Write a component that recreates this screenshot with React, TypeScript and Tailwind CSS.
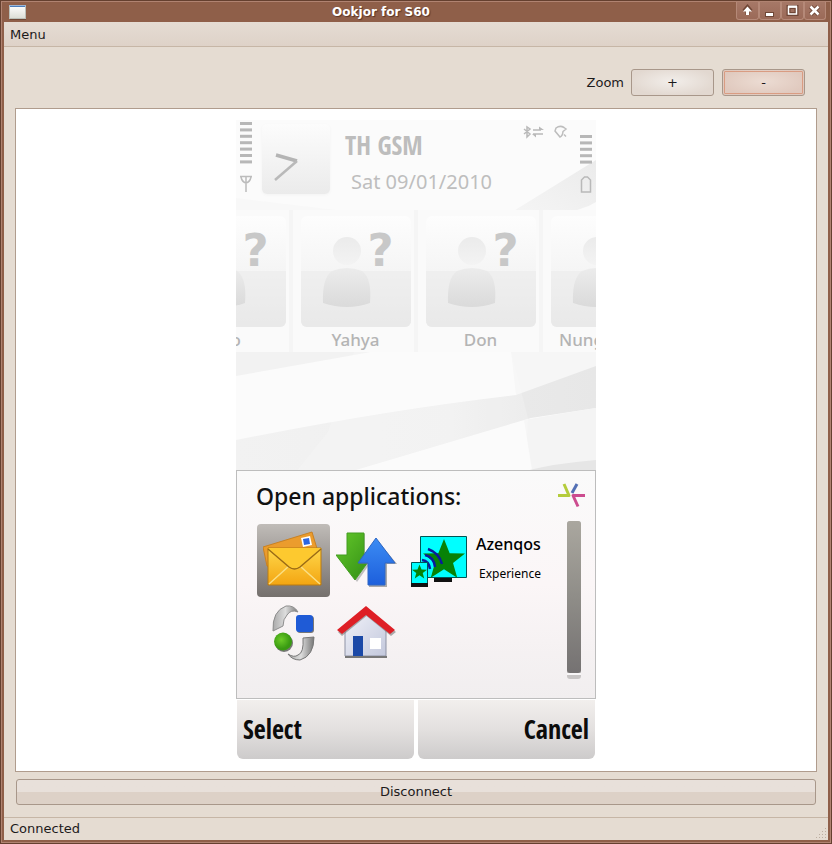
import React from "react";

const PHONE_FONT = "font-['Noto_Sans',sans-serif]";
const NARROW_FONT = "font-['Open_Sans_Condensed','Liberation_Sans_Narrow','Noto_Sans',sans-serif]";

function WindowButton({ label, children }: { label: string; children: React.ReactNode }) {
  return (
    <button
      type="button"
      aria-label={label}
      className="flex h-[18px] w-[23px] items-center justify-center rounded-b-[3px] border border-t-0 border-[#b58978] bg-linear-to-b from-[#a67867] to-[#9b6a58]"
    >
      <svg width="15" height="15" viewBox="0 0 15 15" aria-hidden="true">
        {children}
      </svg>
    </button>
  );
}

function TitleBar() {
  return (
    <header className="grid h-5 shrink-0 grid-cols-[24px_1fr_94px] items-start bg-[#8f5f49]">
      <svg className="mt-[3px] ml-[6px]" width="20" height="15" viewBox="0 0 20 15" aria-hidden="true">
        <defs>
          <linearGradient id="win" x2="0" y2="1">
            <stop stopColor="#fff" />
            <stop offset="1" stopColor="#dcddd6" />
          </linearGradient>
        </defs>
        <path d="M2 14.500h16" stroke="#6f4837" />
        <rect x="1.500" y=".5" width="16" height="13" fill="url(#win)" stroke="#bcc0ba" />
        <path d="M1 .5h17" stroke="#9bb4d4" />
        <path d="M2 1.500h15" stroke="#4b7dbb" />
      </svg>
      <h1 className="text-center text-[12px] leading-5 font-bold text-white [text-shadow:1px_1px_1px_#5a3425]">
        Ookjor for S60
      </h1>
      <div className="flex justify-end pr-1">
        <WindowButton label="Shade">
          <path d="M7.500 12V5M4 8l3.500-4L11 8" fill="none" stroke="#6f4636" strokeWidth="4" />
          <path d="M6 12V8.500H3L7.500 3.500 12 8.500H9v3.500z" fill="#fff" />
        </WindowButton>
        <WindowButton label="Minimize">
          <path d="M3 9h9v5H3z" fill="#6f4636" />
          <path d="M4 10h7v3H4z" fill="#fff" />
        </WindowButton>
        <WindowButton label="Maximize">
          <path d="M3.500 4h8v7h-8z" fill="none" stroke="#6f4636" strokeWidth="4" />
          <path d="M3.500 4h8v7h-8z" fill="none" stroke="#fff" strokeWidth="1.500" />
          <path d="M3 3.500h9" stroke="#fff" strokeWidth="2" />
        </WindowButton>
        <WindowButton label="Close">
          <path d="M3.500 3.500l8 8M11.500 3.500l-8 8" stroke="#6f4636" strokeWidth="4.500" />
          <path d="M3.500 3.500l8 8M11.500 3.500l-8 8" stroke="#fff" strokeWidth="2.500" />
        </WindowButton>
      </div>
    </header>
  );
}

function Wallpaper() {
  return (
    <svg className="absolute inset-0 size-full" viewBox="0 0 360 640" preserveAspectRatio="none" aria-hidden="true">
      <defs>
        <linearGradient id="swoosh" x1="0" x2="1">
          <stop stopColor="#f2f2f2" />
          <stop offset=".6" stopColor="#efefef" />
          <stop offset=".8" stopColor="#e9e9e9" />
          <stop offset="1" stopColor="#e7e7e7" />
        </linearGradient>
        <linearGradient id="corner" x1="1" y1="0" x2="0" y2="1">
          <stop stopColor="#ebebeb" />
          <stop offset="1" stopColor="#f5f5f5" />
        </linearGradient>
      </defs>
      <rect width="360" height="640" fill="#fbfbfb" />
      <path d="M360 40L360 82 Q345 92 320 92H276Z" fill="url(#corner)" />
      <path d="M0 78L100 90H0Z" fill="#f8f8f8" />
      <path d="M0 232H135L0 256Z" fill="#f2f2f2" />
      <path d="M275 232H360V255L280 276Z" fill="#f6f6f6" />
      <path d="M0 320Q150 290 280 275L360 246V288L295 298L120 350H0Z" fill="url(#swoosh)" />
      <path d="M288 300L360 288V350H296Z" fill="#f4f4f4" />
      <path d="M285 352Q320 343 360 340V352Z" fill="#e6e6e6" />
      <path d="M118 232L92 312L60 352H290L292 298L275 232Z" fill="#fff" opacity=".2" />
    </svg>
  );
}

function LevelBars({ count }: { count: number }) {
  return (
    <svg width="12" height={count === 7 ? 42 : 29} viewBox={count === 7 ? "0 0 12 42" : "0 0 12 29"} aria-hidden="true">
      {Array.from({ length: count }, (_, i) => (
        <rect key={i} y={i * 6.4} width="12" height="3" fill="#b7b7b7" />
      ))}
    </svg>
  );
}

function PhoneStatus() {
  return (
    <div className="relative flex h-[90px] items-start">
      <div className="flex w-[26px] flex-col items-center gap-[11px] pt-[2px] pr-[6px]">
        <LevelBars count={7} />
        <svg width="12" height="17" viewBox="0 0 12 17" fill="none" stroke="#bcbcbc" strokeWidth="1.500" aria-hidden="true">
          <path d="M6 17V1M0 1.500h12M1 2q1 5 5 6q4-1 5-6" />
        </svg>
      </div>
      <div className="mt-1 flex h-[70px] w-[68px] items-center rounded-[5px] bg-linear-to-b from-[#fcfcfc] to-[#ebebeb] shadow-sm shadow-[#f4f4f4]">
        <svg className="mt-4 ml-3" width="26" height="28" viewBox="0 0 26 28" fill="none" aria-hidden="true">
          <path d="M2 2l21 6" stroke="#b4b4b4" strokeWidth="3.500" />
          <path d="M23 8L1 27" stroke="#b9b9b9" strokeWidth="2.500" />
        </svg>
      </div>
      <div className="flex flex-1 flex-col pt-[9px] pl-[15px] whitespace-nowrap">
        <p className={`${NARROW_FONT} text-[26px] leading-8 font-bold text-[#bdbdbd]`}>TH GSM</p>
        <p className={`${PHONE_FONT} pt-[7px] pl-[6px] text-[20px] leading-7 text-[#bebebe]`}>Sat 09/01/2010</p>
      </div>
      <div className="absolute top-[5px] right-[28px] flex gap-2">
        <svg width="22" height="14" viewBox="0 0 22 14" fill="none" stroke="#b9b9b9" strokeWidth="1.500" aria-hidden="true">
          <path d="M1 4l6 5-3 3V2l3 2-6 5M10 5h8M10 9h10" />
          <path d="M16 1.500l5 3.500h-5zM13 12.500L9 9h4z" fill="#b9b9b9" stroke="none" />
        </svg>
        <svg width="15" height="14" viewBox="0 0 15 14" fill="none" stroke="#bdbdbd" strokeWidth="1.500" aria-hidden="true">
          <path d="M3 3q4-3 8-.5l2 1.500-3 2.500q0 3-2 5L7 12 2 6zM11 9.500l2 2" />
        </svg>
      </div>
      <div className="flex w-4 flex-col gap-[12px] pt-[15px]">
        <LevelBars count={5} />
        <svg width="12" height="17" viewBox="0 0 12 17" fill="none" stroke="#b9b9b9" strokeWidth="1.500" aria-hidden="true">
          <path d="M1.500 16V4l3-3h3l3 3v12z" />
        </svg>
      </div>
    </div>
  );
}

const LABEL_ALIGN = {
  center: "self-center",
  start: "self-start pl-3",
  end: "self-end pr-12",
};

function Contact({ name, align = "center" }: { name: string; align?: keyof typeof LABEL_ALIGN }) {
  return (
    <li className="flex h-[142px] w-[125px] shrink-0 flex-col items-center border-r-4 border-[#f5f5f5] bg-[#fafafa] pt-[6px] pl-1">
      <div className="relative h-[111px] w-[110px] overflow-hidden rounded-[6px] bg-linear-to-b from-[#fdfdfd] via-[#f5f5f5] to-[#e9e9e9]">
        <svg width="110" height="111" viewBox="0 0 110 111" aria-hidden="true">
          <defs>
            <linearGradient id="person" x2="0" y2="1">
              <stop stopColor="#ececec" />
              <stop offset="1" stopColor="#dadada" />
            </linearGradient>
            <linearGradient id="head" x2="0" y2="1">
              <stop stopColor="#ebebeb" />
              <stop offset="1" stopColor="#f3f3f3" />
            </linearGradient>
          </defs>
          <path d="M0 55H110V111H0Z" fill="#e8e8e8" opacity=".45" />
          <circle cx="46" cy="35" r="14" fill="url(#head)" />
          <path d="M22 87Q21 62 31 55Q46 49 61 55Q71 62 69 87Q46 95 22 87Z" fill="url(#person)" />
        </svg>
        <span className="absolute top-3 left-[67px] font-['DejaVu_Sans',sans-serif] text-[45px] leading-[46px] font-bold text-[#c8c8c8]">
          ?
        </span>
      </div>
      <span className={`${PHONE_FONT} ${LABEL_ALIGN[align]} pt-[2px] text-[17px] leading-[22px] font-medium text-[#b4b4b4]`}>
        {name}
      </span>
    </li>
  );
}

function AppTile({ label, selected, children }: { label: string; selected?: boolean; children: React.ReactNode }) {
  return (
    <button
      type="button"
      aria-label={label}
      className={
        selected
          ? "flex size-[73px] items-center justify-center rounded-[4px] bg-linear-to-b from-[#c0bcb8] to-[#75706d]"
          : "flex size-[73px] items-center justify-center"
      }
    >
      <svg width="62" height="62" viewBox="0 0 62 62" aria-hidden="true">
        {children}
      </svg>
    </button>
  );
}

const STAR = "M0-10L2.700-3.200 10-3.100 4.300 1.400 6.300 8.500 0 4.400-6.300 8.500-4.300 1.400-10-3.100-2.700-3.200Z";

function OpenApplications() {
  return (
    <section className="flex h-[229px] flex-col border border-[#bdbdbd] bg-linear-to-b from-[#fafafa] via-[#fbf6f7] to-[#f1eeef]">
      <div className="flex items-start justify-between pt-[7px] pr-[9px] pl-[19px]">
        <h2 className={`${PHONE_FONT} text-[23px] leading-9 font-medium text-[#111]`}>Open applications:</h2>
        <svg className="mt-1" width="29" height="27" viewBox="0 0 29 27" fill="none" strokeWidth="3" aria-hidden="true">
          <path d="M1 13.500h11L7 2" stroke="#b4cc3c" strokeLinejoin="round" />
          <path d="M15 11l5-9" stroke="#5470b5" />
          <path d="M28 13.500H16l5 11" stroke="#cc4c8f" strokeLinejoin="round" />
        </svg>
      </div>
      <div className="flex items-start pt-[7px] pl-5">
        <div className="grid grid-cols-[73px_73px_73px] pt-[3px]">
          <AppTile label="Messaging" selected>
            <defs>
              <linearGradient id="mail" x2="0" y2="1">
                <stop stopColor="#ffd84a" />
                <stop offset="1" stopColor="#f3a512" />
              </linearGradient>
            </defs>
            <path d="M0 17L49 2 55 22 12 38 4 36Z" fill="#eb9c2d" stroke="#c98122" />
            <path d="M38 8l9-2 2 9-9 2z" fill="#fff" />
            <path d="M40 9l6-1 1 6-6 1z" fill="#2d66e0" />
            <path d="M5 18H58V55H5Z" fill="url(#mail)" stroke="#b97a12" />
            <path d="M6 54L26 36M57 54L37 36" stroke="#fbdf83" strokeWidth="1.500" />
            <path d="M5 18L26 36Q31.500 41 37 36L58 18Z" fill="#fdc92f" />
            <path d="M5 19L26 37Q31.500 41 37 37L58 19" fill="none" stroke="#9a6b15" strokeWidth="1.500" />
          </AppTile>
          <AppTile label="Connections">
            <defs>
              <linearGradient id="down" x2="1" y2="1">
                <stop stopColor="#64c82a" />
                <stop offset="1" stopColor="#2f8a14" />
              </linearGradient>
              <linearGradient id="up" x2="0" y2="1">
                <stop stopColor="#3c8cf4" />
                <stop offset="1" stopColor="#1d5fdc" />
              </linearGradient>
            </defs>
            <path d="M12 4H29V25H40L21 52 2 25H12Z" fill="#888" opacity=".5" />
            <path d="M11 3H28V25H37L19 50 0 25H11Z" fill="url(#down)" stroke="#429d20" />
            <path d="M41 10L61 34H51V57H33V34H23Z" fill="#777" opacity=".6" />
            <path d="M40 8L59 33H49V55H32V33H22Z" fill="url(#up)" stroke="#2e67c4" />
          </AppTile>
          <AppTile label="Azenqos Experience">
            <path d="M11.500 6.500H57.500V47.500H11.500Z" fill="#0ff" stroke="#055" />
            <path d="M25 48H43V52H25Z" fill="#111" />
            <g transform="translate(35 30) scale(2.100)">
              <path d={STAR} fill="#078207" />
            </g>
            <path d="M13 30q7 1 8 9M16 25q9 2 10 12M19 19q11 4 14 15" fill="none" stroke="#0a1a9c" strokeWidth="2.500" />
            <path d="M2.500 32.500H18.500V55.500H2.500Z" fill="#0ff" stroke="#055" />
            <path d="M2 53H19V57H2Z" fill="#111" />
            <g transform="translate(10.500 42) scale(.75)">
              <path d={STAR} fill="#078207" />
            </g>
          </AppTile>
          <AppTile label="Switch">
            <defs>
              <linearGradient id="ring">
                <stop stopColor="#aaa" />
                <stop offset=".5" stopColor="#ddd" />
                <stop offset="1" stopColor="#777" />
              </linearGradient>
              <radialGradient id="ball" cx=".4" cy=".4">
                <stop stopColor="#6ccc28" />
                <stop offset="1" stopColor="#399a12" />
              </radialGradient>
            </defs>
            <path d="M10 28Q9 8 23 3Q31 2 35 9Q28 6 24 12Q20 16 20 23Z" fill="url(#ring)" stroke="#8d8d8d" />
            <path d="M40 35Q41 50 35 52Q31 55 25 51Q29 57 37 57Q51 53 51 34Z" fill="url(#ring)" stroke="#777" />
            <circle cx="21" cy="40" r="9" fill="#777" />
            <circle cx="20" cy="38.500" r="9" fill="url(#ball)" />
            <rect x="34" y="13" width="17" height="17" rx="3" fill="#777" />
            <rect x="33" y="12" width="17" height="17" rx="3" fill="#1f5bd6" />
          </AppTile>
          <AppTile label="Home">
            <defs>
              <linearGradient id="wall" x2="1" y2="1">
                <stop stopColor="#f2f3fa" />
                <stop offset="1" stopColor="#c3c8dc" />
              </linearGradient>
            </defs>
            <path d="M9 27L31 8 50 27V53H9Z" fill="url(#wall)" stroke="#8e93a5" />
            <path d="M9 54H51" stroke="#777" strokeWidth="2" />
            <path d="M30.500 5L60 29 55 33 30.500 13 6 33 2 29Z" fill="#777" opacity=".6" />
            <path d="M30 3L59 27 54 31 30 12 6 31 1 27Z" fill="#de1f26" />
            <path d="M17 33H27V53H17Z" fill="#1b49a7" />
            <path d="M34 35H45V46H34Z" fill="#fff" />
          </AppTile>
        </div>
        <div className={`${PHONE_FONT} flex flex-1 flex-col pt-[13px] text-black`}>
          <span className="text-[16px] leading-5 font-medium">Azenqos</span>
          <span className="pt-[10px] pl-[3px] text-[12px] leading-5">Experience</span>
        </div>
        <div className="mr-[14px] flex h-[158px] w-[14px] flex-col rounded-[3px] bg-[#c8c5c5]">
          <div className="h-[152px] rounded-[3px] bg-linear-to-b from-[#aaa79f] via-[#8f8d88] to-[#757272]" />
          <div className="h-[2px] bg-[#f8f6f7]" />
        </div>
      </div>
    </section>
  );
}

function Phone() {
  return (
    <div className="relative flex h-[640px] w-[360px] flex-col overflow-hidden">
      <Wallpaper />
      <div className="relative flex flex-1 flex-col">
        <PhoneStatus />
        <ul className="-ml-[68px] flex w-[500px]">
          <Contact name="o" align="end" />
          <Contact name="Yahya" />
          <Contact name="Don" />
          <Contact name="Nung" align="start" />
        </ul>
      </div>
      <div className="relative">
        <OpenApplications />
        <div className={`${NARROW_FONT} grid h-[60px] grid-cols-2 gap-1 bg-white px-px pt-px text-[26px] font-bold text-[#0c0c0c]`}>
          <button type="button" className="rounded-b-[6px] bg-linear-to-b from-[#f2efed] via-[#e3e0df] to-[#cdcbcb] px-[6px] text-left">
            Select
          </button>
          <button type="button" className="rounded-b-[6px] bg-linear-to-b from-[#f2efed] via-[#e3e0df] to-[#cdcbcb] px-[6px] text-right">
            Cancel
          </button>
        </div>
        <div className="h-px bg-white" />
      </div>
    </div>
  );
}

export default function App() {
  return (
    <div className="flex min-h-screen flex-col border border-[#65402f] bg-[#e5dcd2] font-['DejaVu_Sans',sans-serif] text-[13px] text-[#1c1a1b]">
      <div className="flex flex-1 flex-col border border-[#b08371]">
        <TitleBar />
        <div className="flex flex-1 flex-col border-2 border-t-0 border-[#8f5f49]">
          <nav className="flex h-[25px] items-center border-b border-[#c6b6a6] bg-linear-to-b from-[#e5dcd3] to-[#ded2c8] px-[6px] pt-px">
            <button type="button">Menu</button>
          </nav>
          <main className="flex flex-1 flex-col px-[11px] pt-[22px] pb-3">
            <div className="flex items-center justify-end pr-3">
              <span className="pr-[7px]">Zoom</span>
              <button
                type="button"
                aria-label="Zoom in"
                className="h-[27px] w-[83px] rounded-[3px] border border-[#a8978a] bg-[radial-gradient(ellipse_at_50%_45%,#f2eeea,#e2d8d0_75%)]"
              >
                +
              </button>
              <button
                type="button"
                aria-label="Zoom out"
                className="ml-2 h-[27px] w-[83px] rounded-[3px] border border-[#a8978a] bg-[radial-gradient(ellipse_at_50%_45%,#ecdcd3,#e0c9be_75%)] outline-1 -outline-offset-3 outline-[#d99c82]"
              >
                -
              </button>
            </div>
            <div className="mt-3 flex flex-1 items-center justify-center border border-[#b09c8d] bg-white">
              <Phone />
            </div>
            <button
              type="button"
              className="mx-px mt-[7px] h-[26px] rounded-[3px] border border-[#a8978a] bg-linear-to-b from-[#e8e0da] from-50% to-[#ddd1c7] to-50%"
            >
              Disconnect
            </button>
          </main>
          <footer className="flex h-[23px] items-center justify-between border-t border-[#c6b6a6] pl-[6px]">
            <span>Connected</span>
            <svg className="self-end" width="12" height="12" viewBox="0 0 12 12" fill="#bcaea1" aria-hidden="true">
              <path d="M9 0h1v1H9zM9 3h1v1H9zM6 3h1v1H6zM9 6h1v1H9zM6 6h1v1H6zM3 6h1v1H3zM9 9h1v1H9zM6 9h1v1H6zM3 9h1v1H3zM0 9h1v1H0z" />
            </svg>
          </footer>
        </div>
      </div>
    </div>
  );
}
